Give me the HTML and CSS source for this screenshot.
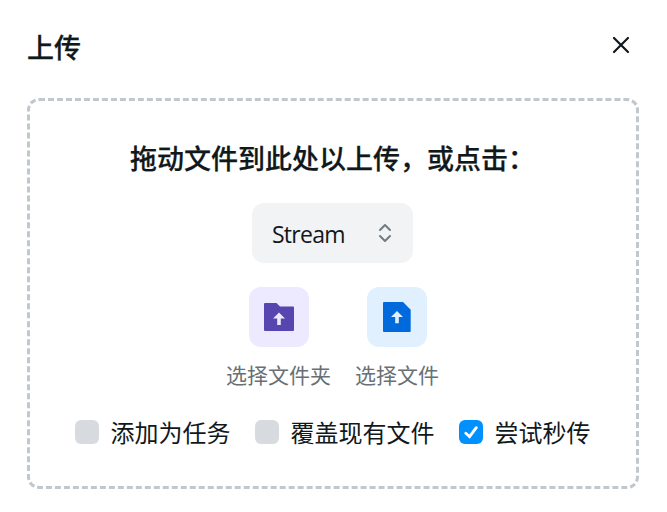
FILE: index.html
```html
<!DOCTYPE html>
<html lang="zh-CN">
<head>
<meta charset="utf-8">
<title>上传</title>
<link rel="stylesheet" href="styles.css">
</head>
<body>
<main class="modal">
  <header class="head">
    <h1 class="title">上传</h1>
    <button class="close" aria-label="关闭"><svg width="18" height="18" viewBox="0 0 18 18"><path d="M2 2L16 16M16 2L2 16" fill="none" stroke="#11181c" stroke-width="2.2" stroke-linecap="round"/></svg></button>
  </header>
  <section class="drop">
    <h2 class="hint">拖动文件到此处以上传，或点击：</h2>
    <div class="select"><span class="value">Stream</span><svg width="14" height="20" viewBox="0 0 14 20"><path d="M2 7L7 2L12 7M2 13L7 18L12 13" fill="none" stroke="#747b80" stroke-width="2" stroke-linecap="round" stroke-linejoin="round"/></svg></div>
    <div class="picks">
      <div class="pick">
        <div class="tile purple"><svg width="32" height="28" viewBox="0 0 32 28"><path fill="#5746af" d="M2 0H13.5L17 3.5H30Q31 3.5 31 4.5V27Q31 28 30 28H2Q1 28 1 27V1Q1 0 2 0Z"/><path fill="#ede9fe" d="M16 9.5L22 15.5H17.8V22H14.2V15.5H10Z"/></svg></div>
        <span>选择文件夹</span>
      </div>
      <div class="pick">
        <div class="tile blue"><svg width="28" height="30" viewBox="0 0 28 30"><path fill="#006adc" d="M1 0H20L27.7 7.7V29Q27.7 30 26.7 30H1Q0 30 0 29V1Q0 0 1 0Z"/><path fill="#e1f0ff" d="M14 9L20 15H15.8V21.3H12.2V15H8Z"/></svg></div>
        <span>选择文件</span>
      </div>
    </div>
    <div class="checks">
      <label class="check"><span class="box"></span><span class="label">添加为任务</span></label>
      <label class="check"><span class="box"></span><span class="label">覆盖现有文件</span></label>
      <label class="check"><span class="box on"><svg width="24" height="24" viewBox="0 0 24 24"><path d="M6.8 13.2L10.6 16.7L17.3 7.7" fill="none" stroke="#fff" stroke-width="2.9" stroke-linecap="round"/></svg></span><span class="label">尝试秒传</span></label>
    </div>
  </section>
</main>
</body>
</html>
```

FILE: styles.css
```css
* { box-sizing: border-box; }
body { margin: 0; background: #fff; color: #11181c; font-family: "Noto Sans", "Noto Sans CJK SC", sans-serif; }
.modal { height: 512px; padding: 28px 28px 0 27px; }
.head { display: flex; justify-content: space-between; height: 70px; }
.title, .hint { margin: 0; font-size: 27px; line-height: 40px; font-weight: 500; white-space: nowrap; -webkit-text-stroke: .25px #11181c; }
.close { width: 18px; height: 18px; margin: 8px 9px 0 0; padding: 0; border: 0; background: none; }
svg { display: block; }
.drop { width: 612px; height: 391px; padding: 38px 1px 0 0; border: 3px dashed #c1c8cd; border-radius: 12px; display: flex; flex-direction: column; align-items: center; }
.select { margin-top: 24px; width: 161px; height: 60px; padding: 0 21px 0 20px; border-radius: 12px; background: #f1f3f5; display: flex; align-items: center; justify-content: space-between; }
.value { padding-top: 1px; font-family: "Open Sans", "Noto Sans", sans-serif; font-size: 23px; letter-spacing: -.75px; }
.picks { display: flex; gap: 24px; margin-top: 24px; }
.pick { display: flex; flex-direction: column; align-items: center; color: #687076; font-size: 21px; line-height: 30px; gap: 13px; }
.tile { width: 60px; height: 60px; border-radius: 12px; display: flex; align-items: center; justify-content: center; }
.purple { background: #ede9fe; }
.blue { background: #e1f0ff; }
.checks { display: flex; gap: 24px; margin-top: 24px; }
.check { display: flex; align-items: center; gap: 12px; font-size: 24px; line-height: 34px; white-space: nowrap; }
.label { padding-top: 2px; }
.box { width: 24px; height: 24px; border-radius: 6px; background: #d7dbdf; }
.on { background: #0091ff; }
```
